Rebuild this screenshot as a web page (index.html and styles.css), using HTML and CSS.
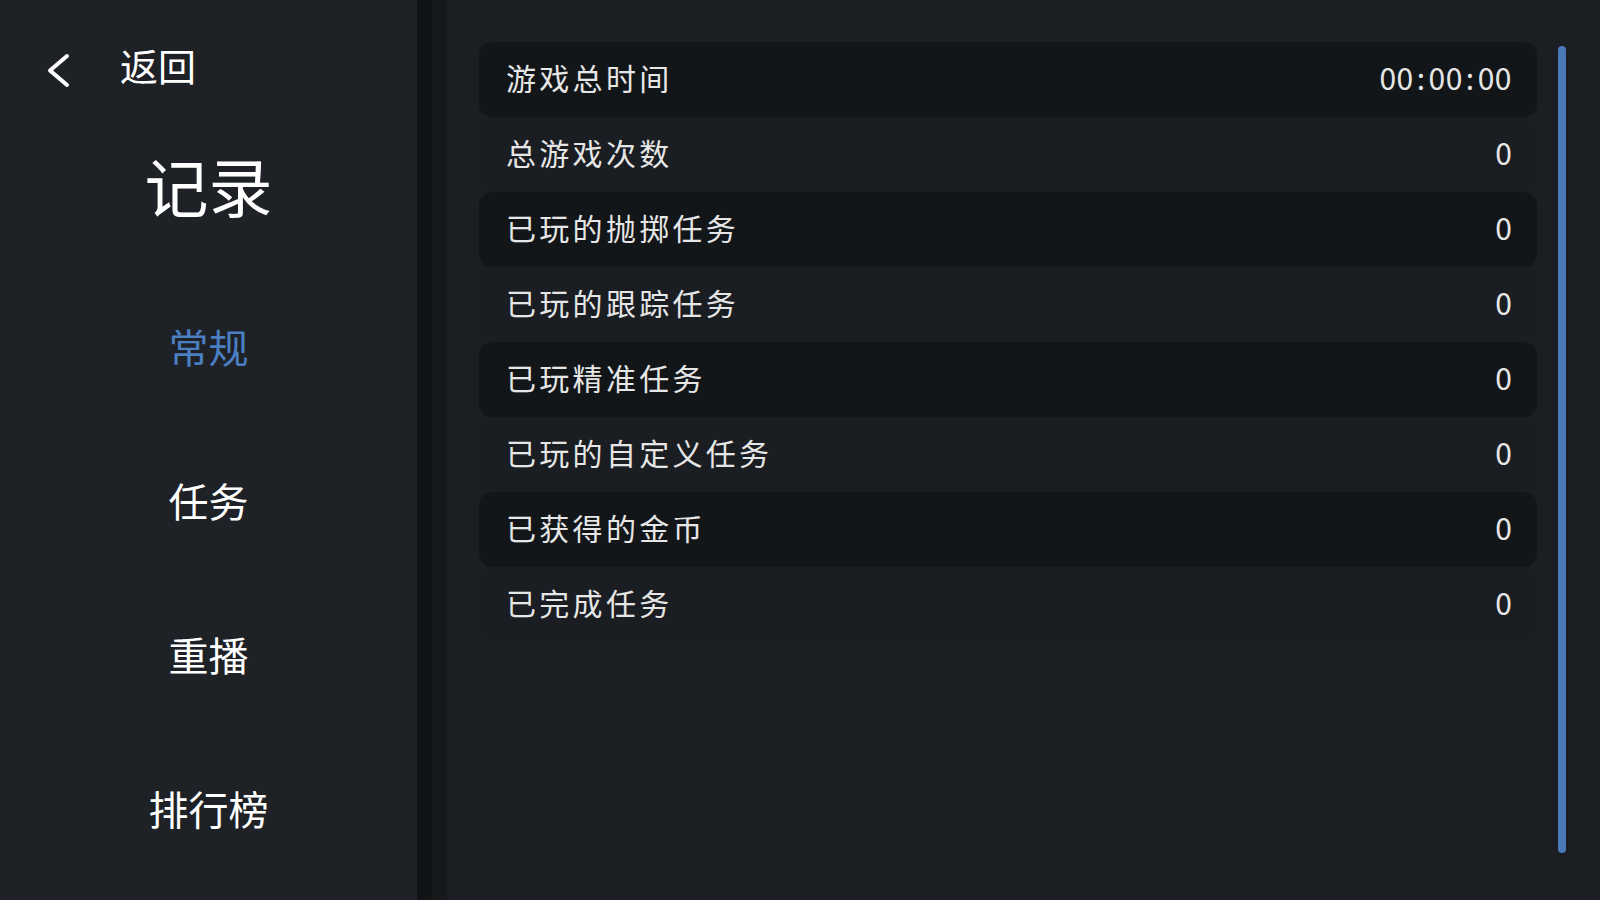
FILE: index.html
```html
<!DOCTYPE html>
<html lang="zh-CN">
<head>
<meta charset="utf-8">
<title>记录</title>
<link rel="stylesheet" href="styles.css">
</head>
<body>
<div class="app">
  <aside class="sidebar">
    <div class="back">
      <svg class="back-icon" width="24" height="36" viewBox="0 0 24 36">
        <path d="M21 4 L4 18.5 L21 33" fill="none" stroke="#ffffff" stroke-width="4" stroke-linecap="round" stroke-linejoin="round"/>
      </svg>
      <span class="back-text">返回</span>
    </div>
    <h1 class="title">记录</h1>
    <nav class="menu">
      <div class="menu-item active">常规</div>
      <div class="menu-item">任务</div>
      <div class="menu-item">重播</div>
      <div class="menu-item">排行榜</div>
    </nav>
  </aside>
  <div class="divider"></div>
  <main class="main">
    <div class="list">
      <div class="row dark"><span class="label">游戏总时间</span><span class="value time">00<span class="colon">:</span>00<span class="colon">:</span>00</span></div>
      <div class="row light"><span class="label">总游戏次数</span><span class="value">0</span></div>
      <div class="row dark"><span class="label">已玩的抛掷任务</span><span class="value">0</span></div>
      <div class="row light"><span class="label">已玩的跟踪任务</span><span class="value">0</span></div>
      <div class="row dark"><span class="label">已玩精准任务</span><span class="value">0</span></div>
      <div class="row light"><span class="label">已玩的自定义任务</span><span class="value">0</span></div>
      <div class="row dark"><span class="label">已获得的金币</span><span class="value">0</span></div>
      <div class="row light"><span class="label">已完成任务</span><span class="value">0</span></div>
    </div>
    <div class="scrollbar"></div>
  </main>
</div>
</body>
</html>
```

FILE: styles.css
```css
* { box-sizing: border-box; }

html, body {
  margin: 0;
  padding: 0;
  width: 1600px;
  height: 900px;
  overflow: hidden;
  background: #1b1e23;
  font-family: "Noto Sans CJK SC", "Noto Sans", sans-serif;
  color: #ffffff;
}

.app {
  display: flex;
  width: 1600px;
  height: 900px;
}

.sidebar {
  width: 417px;
  flex: none;
  background: #1e2125;
  display: flex;
  flex-direction: column;
  padding-top: 48px;
}

.back {
  display: flex;
  align-items: center;
  height: 40px;
  padding-left: 46px;
}

.back-icon {
  display: block;
  flex: none;
  position: relative;
  top: 2px;
}

.back-text {
  margin-left: 50px;
  font-size: 38px;
  line-height: 40px;
  color: #ffffff;
  position: relative;
  top: -3px;
}

.title {
  margin: 64px 0 0;
  font-size: 64px;
  line-height: 64px;
  font-weight: 400;
  text-align: center;
  color: #ffffff;
}

.menu {
  margin-top: 53px;
  display: flex;
  flex-direction: column;
}

.menu-item {
  height: 154px;
  display: flex;
  align-items: center;
  justify-content: center;
  font-size: 40px;
  color: #ffffff;
}

.menu-item.active {
  color: #4a7fc4;
}

.divider {
  width: 30px;
  flex: none;
  background: linear-gradient(to right, #111417 0, #111417 15px, #16191c 15px, #16191c 30px);
}

.main {
  flex: 1;
  display: flex;
  align-items: flex-start;
  padding: 42px 0 0 32px;
}

.list {
  width: 1058px;
  display: flex;
  flex-direction: column;
}

.row {
  height: 75px;
  display: flex;
  align-items: center;
  justify-content: space-between;
  padding: 0 22px 6px 27px;
  border-radius: 13px;
  font-size: 30px;
  letter-spacing: 3.3px;
  color: #e6e6e6;
}

.row.dark { background: #131619; }
.row.light { background: #1a1d22; }

.value {
  letter-spacing: 3px;
}

.value.time {
  letter-spacing: 0.5px;
  margin-right: 3px;
}

.colon {
  margin: 0 3px 0 3px;
}

.scrollbar {
  margin-left: 21px;
  margin-top: 4px;
  width: 8px;
  height: 807px;
  border-radius: 4px;
  background: #4a78b8;
}
```
